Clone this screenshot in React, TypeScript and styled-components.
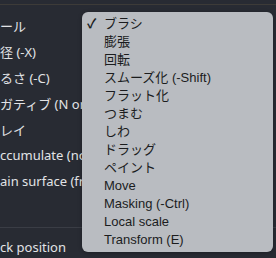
import React from 'react';
import styled, { createGlobalStyle } from 'styled-components';

const GlobalStyle = createGlobalStyle`
  html, body {
    margin: 0;
    padding: 0;
    background: #282b33;
    overflow: hidden;
  }
`;

const Screen = styled.div`
  position: relative;
  width: 276px;
  height: 258px;
  overflow: hidden;
  background: #282b33;
  font-family: 'Noto Sans', 'Noto Sans CJK JP', sans-serif;
`;

const TopRule = styled.div`
  height: 4px;
  border-bottom: 1px solid #3d3b38;
`;

const Panel = styled.div`
  display: flex;
  flex-direction: column;
  padding-top: 7px;
`;

const Row = styled.div`
  height: 26px;
  display: flex;
  align-items: center;
  color: #e2e3e6;
  font-size: 13px;
  white-space: nowrap;
`;

const Divider = styled.div`
  height: 1px;
  margin: 33px 0 6px;
  background: #3a3d45;
`;

const Menu = styled.ul`
  position: absolute;
  top: 12px;
  left: 82px;
  width: 191px;
  margin: 0;
  padding: 3px 0;
  list-style: none;
  background: #b9bcc1;
  border-radius: 6px;
  box-shadow: 0 1px 4px rgb(0 0 0 / 0.3);
  font-family: 'Liberation Sans', 'Noto Sans CJK JP', sans-serif;
`;

const Item = styled.li`
  position: relative;
  height: 18px;
  line-height: 18px;
  padding-left: 22px;
  color: #1b1c1e;
  font-size: 13px;
  white-space: nowrap;
`;

const Check = styled.span`
  position: absolute;
  left: 5px;
  top: 0;
  font-size: 13px;
  font-weight: bold;
`;

const labels = [
  'ール',
  '径 (-X)',
  'るさ (-C)',
  'ガティブ (N or',
  'レイ',
  'ccumulate (no',
  'ain surface (fro',
];

const tools = [
  'ブラシ',
  '膨張',
  '回転',
  'スムーズ化 (-Shift)',
  'フラット化',
  'つまむ',
  'しわ',
  'ドラッグ',
  'ペイント',
  'Move',
  'Masking (-Ctrl)',
  'Local scale',
  'Transform (E)',
];

export default function App() {
  return (
    <Screen>
      <GlobalStyle />
      <TopRule />
      <Panel>
        {labels.map((label) => (
          <Row key={label}>{label}</Row>
        ))}
        <Divider />
        <Row>ck position</Row>
      </Panel>
      <Menu>
        {tools.map((tool, i) => (
          <Item key={tool}>
            {i === 0 && <Check>✓</Check>}
            {tool}
          </Item>
        ))}
      </Menu>
    </Screen>
  );
}
